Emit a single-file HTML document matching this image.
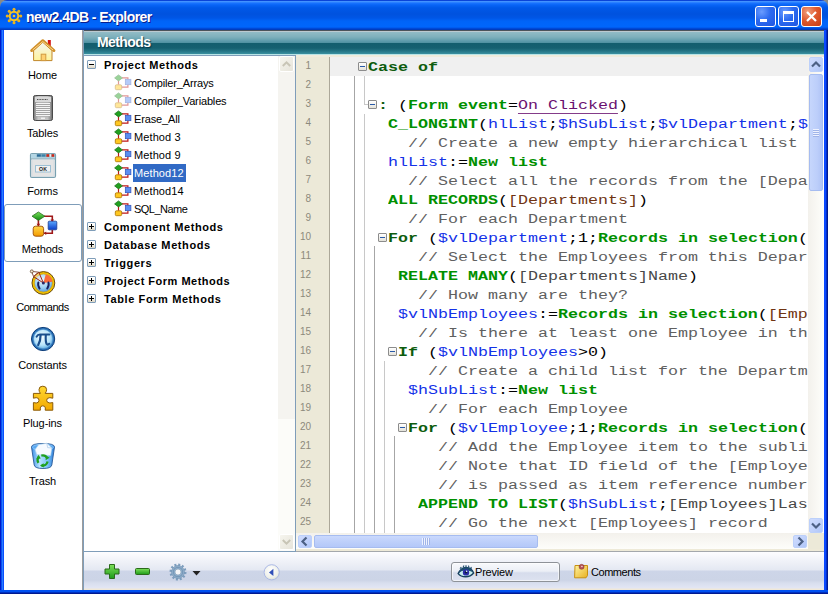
<!DOCTYPE html>
<html><head><meta charset="utf-8">
<style>
*{box-sizing:border-box}
html,body{margin:0;padding:0}
body{width:828px;height:594px;overflow:hidden;position:relative;background:#8a8a86;font-family:"Liberation Sans",sans-serif}
.a{position:absolute}
#title{left:0;top:0;width:828px;height:30px;border-radius:7px 7px 0 0;background:linear-gradient(to bottom,#0a44d8 0px,#0a44d8 1px,#4a98ff 1px,#3a8cff 2px,#1a74ff 3px,#0864f6 5px,#0058e8 8px,#0052de 14px,#0056e6 18px,#0064f8 21px,#0066fc 27px,#0052e4 28px,#0040c8 29px,#0038b8 30px)}
#title .t{left:26px;top:9px;font-weight:bold;font-size:14px;letter-spacing:-.55px;color:#fff;text-shadow:1px 1px 0 #0a1e8c;white-space:nowrap;line-height:16px}
.lb{left:0;top:30px;width:4px;height:564px;background:linear-gradient(to right,#0018c8 0,#0018c8 1px,#0a50f0 1px,#0a50f0 2px,#2a7aff 2px,#2a7aff 3px,#0a50ff 3px)}
.rb{left:824px;top:30px;width:4px;height:564px;background:linear-gradient(to right,#0a48ff 0,#0a48ff 2px,#0030c8 2px,#0030c8 3px,#001890 3px)}
.bb{left:0;top:590px;width:828px;height:4px;background:linear-gradient(to bottom,#0050f0 0,#0050f0 2px,#0030c0 2px,#0030c0 3px,#001890 3px)}
.tbtn{top:6px;width:21px;height:21px;border:1px solid #fff;border-radius:3px}
#side{left:4px;top:30px;width:78px;height:560px;background:#fff}
.sl{left:82px;top:30px;width:2px;height:560px;background:linear-gradient(to right,#9c9c9c 0,#9c9c9c 1px,#7f9db9 1px)}
.lab{width:77px;left:4px;text-align:center;font-size:11px;letter-spacing:-0.1px;color:#000;line-height:13px}
#hdr{left:84px;top:30px;width:740px;height:25px;background:linear-gradient(to bottom,#4c545a 0px,#4c545a 1px,#bccad0 1px,#bccad0 2px,#92bcc6 2px,#7eb0bc 7px,#5e9cac 11px,#4e90a0 13px,#135e6e 13px,#156070 18px,#247484 21px,#3a90a0 24px,#b8e4e6 24px,#b8e4e6 25px)}
#hdr .t{left:13px;top:5px;font-weight:bold;font-size:14px;letter-spacing:-.6px;color:#fff;text-shadow:1px 1px 1px #0b3848;line-height:15px}
#tree{left:84px;top:55px;width:212px;height:497px;background:#fff;border:1px solid #7f9db9;border-left:none}
.tr{height:18px;line-height:18px;font-size:11px;white-space:nowrap;color:#000}
.tc{font-weight:bold;letter-spacing:.6px}
.tm{letter-spacing:-.15px}
.exp{width:9px;height:9px;border:1px solid #7f9db9;border-radius:1px;background:linear-gradient(#fff 0,#fbfaf6 40%,#dcd6c4 100%)}
.exp .h{position:absolute;left:1px;top:3px;width:5px;height:1px;background:#000}
.exp .vv{position:absolute;left:3px;top:1px;width:1px;height:5px;background:#000}
#ed{left:296px;top:55px;width:528px;height:496px;background:#fff}
#gut{left:296px;top:55px;width:34px;height:478px;background:#ece9d8}
.ln{left:295px;width:16px;text-align:right;font-size:10px;color:#8c8a7c;line-height:19px;height:19px}
#code{left:330px;top:57px;width:478px;height:476px;overflow:hidden}
.cl{position:absolute;left:28px;height:19px;line-height:19px;font-family:"Liberation Mono",monospace;font-size:16.664px;white-space:pre;color:#000;transform:scaleY(.82);transform-origin:0 14px}
.k{color:#0d5c0d;font-weight:bold}
.c{color:#009000;font-weight:bold}
.v{color:#1432e8}
.m{color:#606060}
.tb{color:#703412}
.f{color:#484848}
.p{color:#6a1070;text-decoration:underline;text-underline-offset:4.5px}
.fb{position:absolute;width:9px;height:9px;border:1px solid #8c8c8c;border-radius:1px;background:linear-gradient(#fff,#e4e2da)}
.fb:after{content:"";position:absolute;left:1px;top:3px;width:5px;height:1px;background:#2a5aa8}
.gd{position:absolute;width:1px;background:#b4b4b4}
#tool{left:84px;top:552px;width:740px;height:38px;background:linear-gradient(to bottom,#fdfdff 0px,#f0f2f8 9px,#e4e8f2 18px,#cdd5e8 19px,#ccd4e6 28px,#d8deee 31px,#e2e6f4 36px,#f0e8d8 37px)}
</style></head><body>
<div id="title" class="a">
  <svg class="a" style="left:5px;top:7px" width="18" height="18" viewBox="0 0 18 18">
    <g stroke="#e0a818" stroke-width="1.6">
      <line x1="9" y1="2" x2="9" y2="16"/><line x1="2" y1="9" x2="16" y2="9"/>
      <line x1="4.1" y1="4.1" x2="13.9" y2="13.9"/><line x1="13.9" y1="4.1" x2="4.1" y2="13.9"/>
    </g>
    <g fill="#eab420"><circle cx="15.80" cy="9.00" r="1.5"/><circle cx="13.81" cy="13.81" r="1.5"/><circle cx="9.00" cy="15.80" r="1.5"/><circle cx="4.19" cy="13.81" r="1.5"/><circle cx="2.20" cy="9.00" r="1.5"/><circle cx="4.19" cy="4.19" r="1.5"/><circle cx="9.00" cy="2.20" r="1.5"/><circle cx="13.81" cy="4.19" r="1.5"/></g>
    <circle cx="9" cy="9" r="4.3" fill="#0a5ef0" stroke="#f2c428" stroke-width="2"/>
    <circle cx="9" cy="9" r="1.3" fill="#f2c428"/>
  </svg>
  <div class="a t">new2.4DB - Explorer</div>
  <div class="a tbtn" style="left:755px;background:radial-gradient(circle at 30% 25%,#6a9cff 0,#2c6af0 45%,#1f55e0 100%)"><div class="a" style="left:4px;top:12px;width:7px;height:3px;background:#fff"></div></div>
  <div class="a tbtn" style="left:778px;background:radial-gradient(circle at 30% 25%,#6a9cff 0,#2c6af0 45%,#1f55e0 100%)"><div class="a" style="left:4px;top:4px;width:11px;height:11px;border:1px solid #fff;border-top-width:3px"></div></div>
  <div class="a tbtn" style="left:801px;background:radial-gradient(circle at 30% 25%,#f0a080 0,#e05a30 45%,#c83c10 100%)">
    <svg class="a" style="left:3px;top:3px" width="13" height="13"><path d="M2 2 L11 11 M11 2 L2 11" stroke="#fff" stroke-width="2.2"/></svg></div>
</div>
<div class="a lb"></div><div class="a rb"></div><div class="a bb"></div>

<div id="side" class="a"></div>
<div class="a sl"></div>
<div class="a" style="left:4px;top:204px;width:78px;height:58px;border:1px solid #7f9db9;border-radius:3px;background:#fff"></div>
<svg class="a" style="left:0;top:0" width="84" height="594" viewBox="0 0 84 594">
<defs>
<linearGradient id="hw" x1="0" y1="0" x2="0" y2="1"><stop offset="0" stop-color="#f4f4f2"/><stop offset="1" stop-color="#fff49a"/></linearGradient>
<linearGradient id="tg" x1="0" y1="0" x2="1" y2="0"><stop offset="0" stop-color="#7a7a7a"/><stop offset=".25" stop-color="#c8c8c8"/><stop offset=".75" stop-color="#c0c0c0"/><stop offset="1" stop-color="#6a6a6a"/></linearGradient>
<linearGradient id="gg" x1="0" y1="0" x2="0" y2="1"><stop offset="0" stop-color="#7ae05a"/><stop offset="1" stop-color="#0f8a10"/></linearGradient>
<linearGradient id="bg" x1="0" y1="0" x2="0" y2="1"><stop offset="0" stop-color="#5aa8ff"/><stop offset="1" stop-color="#0a3cc8"/></linearGradient>
<linearGradient id="og" x1="0" y1="0" x2="0" y2="1"><stop offset="0" stop-color="#ffd84a"/><stop offset="1" stop-color="#f49a00"/></linearGradient>
<radialGradient id="dial" cx=".45" cy=".35" r=".7"><stop offset="0" stop-color="#f0faff"/><stop offset=".6" stop-color="#9ad0f4"/><stop offset="1" stop-color="#4a90d8"/></radialGradient>
<radialGradient id="pi" cx=".45" cy=".4" r=".6"><stop offset="0" stop-color="#f4fcff"/><stop offset=".7" stop-color="#b8e4fa"/><stop offset="1" stop-color="#6ab4e6"/></radialGradient>
<linearGradient id="pz" x1="0" y1="0" x2="0" y2="1"><stop offset="0" stop-color="#ffd830"/><stop offset="1" stop-color="#f2a800"/></linearGradient>
<linearGradient id="tr" x1="0" y1="0" x2="1" y2="0"><stop offset="0" stop-color="#3a8ee8"/><stop offset=".35" stop-color="#b8e4ff"/><stop offset=".7" stop-color="#7ac4fa"/><stop offset="1" stop-color="#2a7ad8"/></linearGradient>
</defs>
<!-- Home -->
<rect x="47.8" y="40" width="3" height="7" fill="#d41414"/>
<path d="M33.6 50.5 L42.8 42.2 L52 50.5 V60.6 H33.6Z" fill="url(#hw)" stroke="#c0862a" stroke-width="1"/>
<path d="M31.6 50.6 L42.8 40.6 L54 50.6" fill="none" stroke="#d0902a" stroke-width="2.8" stroke-linejoin="round" stroke-linecap="round"/><path d="M32.6 50 L42.8 41.6 L53 50" fill="none" stroke="#ffd890" stroke-width="1"/>
<rect x="41.2" y="54.2" width="4.6" height="6.4" fill="#ffd070" stroke="#d09a40" stroke-width="1"/>
<!-- Tables -->
<rect x="33.5" y="95.5" width="19" height="25" rx="1.8" fill="url(#tg)" stroke="#4a4a4a" stroke-width="1"/>
<rect x="35" y="97" width="16" height="5" fill="#d8d8d8"/>
<path d="M37 99.5 H48" stroke="#505050" stroke-width="1" stroke-dasharray="1 .6"/>
<rect x="35.5" y="102.5" width="15" height="14" fill="#a4a4a4"/>
<g stroke="#f4f4f4" stroke-width="1"><path d="M36 103.5H50M36 105.5H50M36 107.5H50M36 109.5H50M36 111.5H50M36 113.5H50M36 115.5H50"/></g>
<rect x="41" y="117.5" width="4" height="1.5" fill="#f0f0f0"/>
<!-- Forms -->
<rect x="30.5" y="153.5" width="25" height="24" rx="1.5" fill="#e6e6e6" stroke="#78a0b0" stroke-width="1.2"/>
<rect x="31" y="154" width="24" height="4.5" fill="#b4d6e4"/>
<rect x="31" y="158.5" width="24" height="1" fill="#78a0b0"/>
<rect x="32" y="159.5" width="22" height="17" fill="#e4e4e4" stroke="#c8d8e0" stroke-width=".6"/>
<rect x="36.5" y="153.6" width="18" height="3.6" fill="#8ab0c0"/><rect x="37" y="154.4" width="3.8" height="2.2" fill="#2a6a98"/><rect x="41.6" y="154.4" width="3.8" height="2.2" fill="#3a82a8"/><rect x="46.4" y="154.2" width="2.8" height="2.6" fill="#d02818"/><rect x="49.6" y="154.2" width="1.6" height="2.6" fill="#f0f0f0"/><rect x="51.6" y="154.2" width="2.6" height="2.6" fill="#d02818"/>
<rect x="35.5" y="165.5" width="15" height="6.5" fill="#f2f2f2" stroke="#9cc0d4" stroke-width="1"/>
<text x="43" y="171" font-family="Liberation Sans" font-weight="bold" font-size="5.2" text-anchor="middle" fill="#222">OK</text>
<!-- Methods -->
<g stroke="#a01818" stroke-width="1.6" fill="none"><path d="M44 216.3 H52.3 V221"/><path d="M38.4 220 V226"/><path d="M52.3 230 V233.3 H44"/></g>
<path d="M50.5 219.5 L52.3 222 L54.1 219.5Z M36.6 223.8 L38.4 226.3 L40.2 223.8Z M46.2 231.5 L43.8 233.3 L46.2 235.1Z" fill="#a01818"/>
<path d="M38.4 212 L44.8 216.2 L38.4 220.4 L32 216.2Z" fill="url(#gg)" stroke="#2a6a20" stroke-width=".8"/>
<rect x="48.2" y="221.2" width="8.6" height="8.6" rx="1" fill="url(#bg)" stroke="#1a3a90" stroke-width=".8"/>
<rect x="33.2" y="226.2" width="10.4" height="10" rx="2.4" fill="url(#og)" stroke="#9a4a00" stroke-width=".9"/>
<!-- Commands -->
<circle cx="43.4" cy="283" r="11.4" fill="#f2c200" stroke="#6a4a10" stroke-width="1"/>
<circle cx="43.4" cy="283" r="9.1" fill="url(#dial)" stroke="#d49a00" stroke-width=".6"/>
<path d="M43.4 283 L45.8 274.2 A9.1 9.1 0 0 1 52.5 281.8 Z" fill="#fa6a3a"/>
<path d="M38.4 282.4 Q37.4 285.6 39.6 288.6 M48.4 282.4 Q49.4 285.6 47.2 288.6" stroke="#1a2060" stroke-width="1.9" fill="none" stroke-linecap="round"/>
<path d="M43.4 283 L33.6 276.6 L38.8 272.2 Z" fill="#f4e0d8" fill-opacity=".45" stroke="#a02818" stroke-width="1"/>
<path d="M33.6 276.6 L31.6 271.4 L38.8 272.2" fill="none" stroke="#7a4030" stroke-width=".9"/>
<circle cx="43.4" cy="283" r="1.5" fill="#2a2a6a"/>
<circle cx="31.8" cy="271.4" r="1.5" fill="#f4ead8" stroke="#6a4a30" stroke-width=".8"/>
<!-- Constants -->
<circle cx="43.1" cy="339" r="11.6" fill="#2a72b8" stroke="#0c3c78" stroke-width="1"/>
<circle cx="43.1" cy="339" r="9.6" fill="url(#pi)" stroke="#5a9ad0" stroke-width=".6"/>
<path d="M36.6 336.6 Q37.6 334.6 40 334.6 H49.4" stroke="#1a4e8c" stroke-width="2" fill="none" stroke-linecap="round"/>
<path d="M40.6 335 Q40.6 341 38.2 345" stroke="#1a4e8c" stroke-width="2.2" fill="none" stroke-linecap="round"/>
<path d="M45.8 335 Q45.4 341.5 46.6 344 Q47.6 345.4 49.2 343.8" stroke="#1a4e8c" stroke-width="2.1" fill="none" stroke-linecap="round"/>
<!-- Plug-ins -->
<path d="M33.4 393.4 H40.4 Q39 391.6 39 389.6 Q39 386.2 42.8 386.2 Q46.6 386.2 46.6 389.6 Q46.6 391.6 45.2 393.4 H52.8 V398.2 Q49.6 397 47.4 398.4 Q46 400.3 47.4 402.2 Q49.6 403.6 52.8 402.6 V410.2 H45.2 Q45.8 407.6 44.6 406.4 Q42.8 405.2 41 406.4 Q39.8 407.6 40.4 410.2 H33.4 V402.6 Q36.6 403.6 38.4 402.2 Q39.6 400.3 38.4 398.4 Q36.6 397 33.4 398.2 Z" fill="url(#pz)" stroke="#8a5a08" stroke-width="1"/>
<!-- Trash -->
<path d="M31.5 447 Q31.5 443.5 43 443.5 Q54.5 443.5 54.5 447 L51.8 465 Q51.2 468.5 43 468.5 Q34.8 468.5 34.2 465 Z" fill="url(#tr)" stroke="#2a5a98" stroke-width=".9"/>
<ellipse cx="43" cy="447.2" rx="10.6" ry="2.8" fill="#5aa8f0" stroke="#8ac8ff" stroke-width=".7"/>
<path d="M35.2 449.5 L38.6 444.8 L46.8 443.2 L51.8 448 L50.6 455.5 L36.8 454.5 Z" fill="#f6faff" stroke="#b8d8f0" stroke-width=".6"/><path d="M46.8 443.2 L47.6 447.6 L51.8 448" fill="none" stroke="#a8c8e8" stroke-width=".7"/>
<g fill="none" stroke="#20a020" stroke-width="2.3" stroke-linecap="butt">
<path d="M41.3 455.6 A5.2 5.2 0 0 1 47.2 458.2"/>
<path d="M47.6 461.6 A5.2 5.2 0 0 1 41.6 465.6"/>
<path d="M38.4 462.8 A5.2 5.2 0 0 1 38.8 456.8"/>
</g>
<path d="M46 455.6 L49.6 457.8 L45.6 460.2Z M43.6 463.2 L40 465.6 L43.8 467.6Z M36.4 459 L38.6 454.8 L40.8 458.6Z" fill="#20a020"/>
</svg>
<div class="a lab" style="top:69px">Home</div>
<div class="a lab" style="top:127px">Tables</div>
<div class="a lab" style="top:185px">Forms</div>
<div class="a lab" style="top:243px">Methods</div>
<div class="a lab" style="top:301px;letter-spacing:-.45px">Commands</div>
<div class="a lab" style="top:359px">Constants</div>
<div class="a lab" style="top:417px">Plug-ins</div>
<div class="a lab" style="top:475px">Trash</div>


<div id="hdr" class="a"><div class="a t">Methods</div></div>

<div id="tree" class="a"></div>
<div class="a exp" style="left:87px;top:60px"><div class="h"></div></div>
<div class="a tr tc" style="left:104px;top:56px">Project Methods</div>
<div class="a tr tm" style="left:134px;top:74px;">Compiler_Arrays</div>
<div class="a tr tm" style="left:134px;top:92px;">Compiler_Variables</div>
<div class="a tr tm" style="left:134px;top:110px;">Erase_All</div>
<div class="a tr tm" style="left:134px;top:128px;letter-spacing:.1px;">Method 3</div>
<div class="a tr tm" style="left:134px;top:146px;letter-spacing:.1px;">Method 9</div>
<div class="a" style="left:133px;top:164px;width:53px;height:18px;background:#316ac5"></div>
<div class="a tr tm" style="left:134px;top:164px;color:#fff;letter-spacing:.1px;">Method12</div>
<div class="a tr tm" style="left:134px;top:182px;letter-spacing:.1px;">Method14</div>
<div class="a tr tm" style="left:134px;top:200px;letter-spacing:-.52px;">SQL_Name</div>
<div class="a exp" style="left:87px;top:222px"><div class="h"></div><div class="vv"></div></div>
<div class="a tr tc" style="left:104px;top:218px">Component Methods</div>
<div class="a exp" style="left:87px;top:240px"><div class="h"></div><div class="vv"></div></div>
<div class="a tr tc" style="left:104px;top:236px">Database Methods</div>
<div class="a exp" style="left:87px;top:258px"><div class="h"></div><div class="vv"></div></div>
<div class="a tr tc" style="left:104px;top:254px">Triggers</div>
<div class="a exp" style="left:87px;top:276px"><div class="h"></div><div class="vv"></div></div>
<div class="a tr tc" style="left:104px;top:272px;letter-spacing:.5px">Project Form Methods</div>
<div class="a exp" style="left:87px;top:294px"><div class="h"></div><div class="vv"></div></div>
<div class="a tr tc" style="left:104px;top:290px">Table Form Methods</div>
<svg class="a" style="left:0;top:0;overflow:visible" width="1" height="1"><g transform="translate(0,74)" opacity=".45">
<path d="M122 3.8 H127.9 V5.5 M118.5 6.5 V10.8 M127.9 10.6 V13.2 H121.5" stroke="#c01818" stroke-width="1.2" fill="none"/>
<path d="M118.5 0.9 L122.4 3.9 L118.5 6.9 L114.6 3.9Z" fill="#22a020" stroke="#0e6a0e" stroke-width=".7"/>
<rect x="125.3" y="5.3" width="5.6" height="5.4" fill="#5a8ef0" stroke="#3050b8" stroke-width=".7"/>
<rect x="115.3" y="10.8" width="6.4" height="4.9" rx="1.2" fill="#ffc820" stroke="#a87000" stroke-width=".8"/>
</g>
<g transform="translate(0,92)" opacity=".45">
<path d="M122 3.8 H127.9 V5.5 M118.5 6.5 V10.8 M127.9 10.6 V13.2 H121.5" stroke="#c01818" stroke-width="1.2" fill="none"/>
<path d="M118.5 0.9 L122.4 3.9 L118.5 6.9 L114.6 3.9Z" fill="#22a020" stroke="#0e6a0e" stroke-width=".7"/>
<rect x="125.3" y="5.3" width="5.6" height="5.4" fill="#5a8ef0" stroke="#3050b8" stroke-width=".7"/>
<rect x="115.3" y="10.8" width="6.4" height="4.9" rx="1.2" fill="#ffc820" stroke="#a87000" stroke-width=".8"/>
</g>
<g transform="translate(0,110)">
<path d="M122 3.8 H127.9 V5.5 M118.5 6.5 V10.8 M127.9 10.6 V13.2 H121.5" stroke="#c01818" stroke-width="1.2" fill="none"/>
<path d="M118.5 0.9 L122.4 3.9 L118.5 6.9 L114.6 3.9Z" fill="#22a020" stroke="#0e6a0e" stroke-width=".7"/>
<rect x="125.3" y="5.3" width="5.6" height="5.4" fill="#5a8ef0" stroke="#3050b8" stroke-width=".7"/>
<rect x="115.3" y="10.8" width="6.4" height="4.9" rx="1.2" fill="#ffc820" stroke="#a87000" stroke-width=".8"/>
</g>
<g transform="translate(0,128)">
<path d="M122 3.8 H127.9 V5.5 M118.5 6.5 V10.8 M127.9 10.6 V13.2 H121.5" stroke="#c01818" stroke-width="1.2" fill="none"/>
<path d="M118.5 0.9 L122.4 3.9 L118.5 6.9 L114.6 3.9Z" fill="#22a020" stroke="#0e6a0e" stroke-width=".7"/>
<rect x="125.3" y="5.3" width="5.6" height="5.4" fill="#5a8ef0" stroke="#3050b8" stroke-width=".7"/>
<rect x="115.3" y="10.8" width="6.4" height="4.9" rx="1.2" fill="#ffc820" stroke="#a87000" stroke-width=".8"/>
</g>
<g transform="translate(0,146)">
<path d="M122 3.8 H127.9 V5.5 M118.5 6.5 V10.8 M127.9 10.6 V13.2 H121.5" stroke="#c01818" stroke-width="1.2" fill="none"/>
<path d="M118.5 0.9 L122.4 3.9 L118.5 6.9 L114.6 3.9Z" fill="#22a020" stroke="#0e6a0e" stroke-width=".7"/>
<rect x="125.3" y="5.3" width="5.6" height="5.4" fill="#5a8ef0" stroke="#3050b8" stroke-width=".7"/>
<rect x="115.3" y="10.8" width="6.4" height="4.9" rx="1.2" fill="#ffc820" stroke="#a87000" stroke-width=".8"/>
</g>
<g transform="translate(0,164)">
<path d="M122 3.8 H127.9 V5.5 M118.5 6.5 V10.8 M127.9 10.6 V13.2 H121.5" stroke="#c01818" stroke-width="1.2" fill="none"/>
<path d="M118.5 0.9 L122.4 3.9 L118.5 6.9 L114.6 3.9Z" fill="#22a020" stroke="#0e6a0e" stroke-width=".7"/>
<rect x="125.3" y="5.3" width="5.6" height="5.4" fill="#5a8ef0" stroke="#3050b8" stroke-width=".7"/>
<rect x="115.3" y="10.8" width="6.4" height="4.9" rx="1.2" fill="#ffc820" stroke="#a87000" stroke-width=".8"/>
</g>
<g transform="translate(0,182)">
<path d="M122 3.8 H127.9 V5.5 M118.5 6.5 V10.8 M127.9 10.6 V13.2 H121.5" stroke="#c01818" stroke-width="1.2" fill="none"/>
<path d="M118.5 0.9 L122.4 3.9 L118.5 6.9 L114.6 3.9Z" fill="#22a020" stroke="#0e6a0e" stroke-width=".7"/>
<rect x="125.3" y="5.3" width="5.6" height="5.4" fill="#5a8ef0" stroke="#3050b8" stroke-width=".7"/>
<rect x="115.3" y="10.8" width="6.4" height="4.9" rx="1.2" fill="#ffc820" stroke="#a87000" stroke-width=".8"/>
</g>
<g transform="translate(0,200)">
<path d="M122 3.8 H127.9 V5.5 M118.5 6.5 V10.8 M127.9 10.6 V13.2 H121.5" stroke="#c01818" stroke-width="1.2" fill="none"/>
<path d="M118.5 0.9 L122.4 3.9 L118.5 6.9 L114.6 3.9Z" fill="#22a020" stroke="#0e6a0e" stroke-width=".7"/>
<rect x="125.3" y="5.3" width="5.6" height="5.4" fill="#5a8ef0" stroke="#3050b8" stroke-width=".7"/>
<rect x="115.3" y="10.8" width="6.4" height="4.9" rx="1.2" fill="#ffc820" stroke="#a87000" stroke-width=".8"/>
</g></svg>

<div id="ed" class="a"></div>
<div id="gut" class="a"></div>
<div class="a" style="left:329px;top:57px;width:1px;height:476px;background:#aca899"></div>
<div class="a" style="left:296px;top:55px;width:528px;height:2px;background:#f0ebdc"></div>
<div class="a" style="left:330px;top:57px;width:478px;height:19px;background:#f0f0f0"></div>
<div class="a ln" style="top:56px">1</div>
<div class="a ln" style="top:75px">2</div>
<div class="a ln" style="top:94px">3</div>
<div class="a ln" style="top:113px">4</div>
<div class="a ln" style="top:132px">5</div>
<div class="a ln" style="top:151px">6</div>
<div class="a ln" style="top:170px">7</div>
<div class="a ln" style="top:189px">8</div>
<div class="a ln" style="top:208px">9</div>
<div class="a ln" style="top:227px">10</div>
<div class="a ln" style="top:246px">11</div>
<div class="a ln" style="top:265px">12</div>
<div class="a ln" style="top:284px">13</div>
<div class="a ln" style="top:303px">14</div>
<div class="a ln" style="top:322px">15</div>
<div class="a ln" style="top:341px">16</div>
<div class="a ln" style="top:360px">17</div>
<div class="a ln" style="top:379px">18</div>
<div class="a ln" style="top:398px">19</div>
<div class="a ln" style="top:417px">20</div>
<div class="a ln" style="top:436px">21</div>
<div class="a ln" style="top:455px">22</div>
<div class="a ln" style="top:474px">23</div>
<div class="a ln" style="top:493px">24</div>
<div class="a ln" style="top:512px">25</div>
<div id="code" class="a">
<div class="gd" style="left:24px;top:19px;height:457px;background:#a6a6a6"></div>
<div class="gd" style="left:34px;top:19px;height:29px;background:#c8c8c8"></div>
<div class="gd" style="left:34px;top:47px;width:4px;height:1px;background:#c8c8c8"></div>
<div class="gd" style="left:34px;top:57px;height:419px;background:#c8c8c8"></div>
<div class="gd" style="left:44px;top:189px;height:287px;background:#a6a6a6"></div>
<div class="gd" style="left:54px;top:304px;height:172px;background:#c8c8c8"></div>
<div class="gd" style="left:64px;top:379px;height:97px;background:#a6a6a6"></div>
<div class="fb" style="left:28px;top:5px"></div>
<div class="fb" style="left:38px;top:43px"></div>
<div class="fb" style="left:48px;top:176px"></div>
<div class="fb" style="left:58px;top:290px"></div>
<div class="fb" style="left:68px;top:366px"></div>
<div class="cl" style="left:38px;top:0px"><span class="k">Case of</span></div>
<div class="cl" style="left:48px;top:38px"><span class="k">:</span> (<span class="c">Form event</span>=<span class="p">On Clicked</span>)</div>
<div class="cl" style="left:58px;top:57px"><span class="c">C_LONGINT</span>(<span class="v">hlList</span>;<span class="v">$hSubList</span>;<span class="v">$vlDepartment</span>;<span class="v">$vlEmployee</span></div>
<div class="cl" style="left:78px;top:76px"><span class="m">// Create a new empty hierarchical list</span></div>
<div class="cl" style="left:58px;top:95px"><span class="v">hlList</span>:=<span class="c">New list</span></div>
<div class="cl" style="left:78px;top:114px"><span class="m">// Select all the records from the [Departments] table</span></div>
<div class="cl" style="left:58px;top:133px"><span class="c">ALL RECORDS</span>(<span class="tb">[Departments]</span>)</div>
<div class="cl" style="left:78px;top:152px"><span class="m">// For each Department</span></div>
<div class="cl" style="left:58px;top:171px"><span class="k">For</span> (<span class="v">$vlDepartment</span>;1;<span class="c">Records in selection</span>(<span class="tb">[Departments]</span>))</div>
<div class="cl" style="left:88px;top:190px"><span class="m">// Select the Employees from this Department</span></div>
<div class="cl" style="left:68px;top:209px"><span class="c">RELATE MANY</span>(<span class="f">[Departments]Name</span>)</div>
<div class="cl" style="left:88px;top:228px"><span class="m">// How many are they?</span></div>
<div class="cl" style="left:68px;top:247px"><span class="v">$vlNbEmployees</span>:=<span class="c">Records in selection</span>(<span class="tb">[Employees]</span>)</div>
<div class="cl" style="left:88px;top:266px"><span class="m">// Is there at least one Employee in this Department?</span></div>
<div class="cl" style="left:68px;top:285px"><span class="k">If</span> (<span class="v">$vlNbEmployees</span>&gt;0)</div>
<div class="cl" style="left:98px;top:304px"><span class="m">// Create a child list for the Department item</span></div>
<div class="cl" style="left:78px;top:323px"><span class="v">$hSubList</span>:=<span class="c">New list</span></div>
<div class="cl" style="left:98px;top:342px"><span class="m">// For each Employee</span></div>
<div class="cl" style="left:78px;top:361px"><span class="k">For</span> (<span class="v">$vlEmployee</span>;1;<span class="c">Records in selection</span>(<span class="tb">[Employees]</span>))</div>
<div class="cl" style="left:108px;top:380px"><span class="m">// Add the Employee item to the sublist</span></div>
<div class="cl" style="left:108px;top:399px"><span class="m">// Note that ID field of the [Employees] table</span></div>
<div class="cl" style="left:108px;top:418px"><span class="m">// is passed as item reference number</span></div>
<div class="cl" style="left:88px;top:437px"><span class="c">APPEND TO LIST</span>(<span class="v">$hSubList</span>;<span class="f">[Employees]LastName</span>;<span class="f">[Employees]ID</span>)</div>
<div class="cl" style="left:108px;top:456px"><span class="m">// Go the next [Employees] record</span></div>
</div>
<style>
.trk{background:linear-gradient(to right,#f3f1ec,#fefefb)}
.trkh{background:linear-gradient(to bottom,#f3f1ec,#fefefb)}
.sbd{border:1px solid #fff;border-radius:2px;background:linear-gradient(135deg,#f6f5ee,#e6e4da)}
.sbb{border-radius:2px;background:linear-gradient(135deg,#cfdcfe 0%,#c2d3fc 50%,#b0c6f8 100%);border:1px solid #bcd0fa}
.thv{border-radius:2px;background:linear-gradient(to right,#c6d6fc,#bccefa 60%,#b0c4f6);border:1px solid #a6bcf0}
</style>
<!-- tree scrollbar -->
<div class="a" style="left:278px;top:56px;width:17px;height:495px;background:#fcfcf9"></div>
<div class="a" style="left:278px;top:56px;width:17px;height:363px;background:#f5f4f0"></div>
<div class="a sbd" style="left:279px;top:56px;width:15px;height:16px"></div>
<svg class="a" style="left:279px;top:56px" width="15" height="16"><path d="M3.8 10 L7.5 6.3 L11.2 10" stroke="#c8c5b6" stroke-width="2" fill="none"/></svg>
<div class="a sbd" style="left:279px;top:534px;width:15px;height:16px"></div>
<svg class="a" style="left:279px;top:534px" width="15" height="16"><path d="M3.8 6 L7.5 9.7 L11.2 6" stroke="#c8c5b6" stroke-width="2" fill="none"/></svg>
<!-- code v scroll -->
<div class="a trk" style="left:808px;top:57px;width:16px;height:476px"></div>
<div class="a sbb" style="left:809px;top:57px;width:14px;height:15px"></div>
<svg class="a" style="left:809px;top:57px" width="14" height="15"><path d="M3 9.5 L7 5.5 L11 9.5" stroke="#4d6185" stroke-width="2.2" fill="none"/></svg>
<div class="a thv" style="left:809px;top:74px;width:14px;height:117px"></div>
<svg class="a" style="left:809px;top:74px" width="14" height="117"><path d="M4 55.5H10M4 57.5H10M4 59.5H10M4 61.5H10" stroke="#eef2ff" stroke-width="1"/><path d="M4 56.5H10M4 58.5H10M4 60.5H10M4 62.5H10" stroke="#a0b4e8" stroke-width="1"/></svg>
<div class="a sbb" style="left:809px;top:518px;width:14px;height:15px"></div>
<svg class="a" style="left:809px;top:518px" width="14" height="15"><path d="M3 5.5 L7 9.5 L11 5.5" stroke="#4d6185" stroke-width="2.2" fill="none"/></svg>
<!-- code h scroll -->
<div class="a trkh" style="left:296px;top:533px;width:512px;height:17px"></div>
<div class="a" style="left:808px;top:533px;width:16px;height:17px;background:#ece9d8"></div>
<div class="a sbb" style="left:298px;top:535px;width:14px;height:13px"></div>
<svg class="a" style="left:298px;top:535px" width="14" height="13"><path d="M8.5 2.5 L4.5 6.5 L8.5 10.5" stroke="#4d6185" stroke-width="2.2" fill="none"/></svg>
<div class="a thv" style="left:314px;top:535px;width:224px;height:13px;background:linear-gradient(to bottom,#cad9fd,#bccefa 60%,#b4c8f8)"></div>
<svg class="a" style="left:314px;top:535px" width="224" height="13"><path d="M108.5 3V10M110.5 3V10M112.5 3V10M114.5 3V10" stroke="#eef2ff" stroke-width="1"/><path d="M109.5 3V10M111.5 3V10M113.5 3V10M115.5 3V10" stroke="#a0b4e8" stroke-width="1"/></svg>
<div class="a sbb" style="left:793px;top:535px;width:14px;height:13px"></div>
<svg class="a" style="left:793px;top:535px" width="14" height="13"><path d="M5.5 2.5 L9.5 6.5 L5.5 10.5" stroke="#4d6185" stroke-width="2.2" fill="none"/></svg>
<div class="a" style="left:296px;top:549px;width:528px;height:2px;background:#eeead8"></div>
<div class="a" style="left:296px;top:551px;width:528px;height:1px;background:#a4a8ac"></div>


<div id="tool" class="a"></div>
<svg class="a" style="left:0;top:0" width="828" height="594" viewBox="0 0 828 594">
<defs>
<linearGradient id="gpl" x1="0" y1="0" x2="0" y2="1"><stop offset="0" stop-color="#7ee05a"/><stop offset="1" stop-color="#1c9a18"/></linearGradient>
<radialGradient id="gbtn" cx=".45" cy=".35" r=".7"><stop offset="0" stop-color="#ffffff"/><stop offset=".7" stop-color="#eef0ea"/><stop offset="1" stop-color="#d8dcd0"/></radialGradient>
<linearGradient id="note" x1="0" y1="0" x2="1" y2="1"><stop offset="0" stop-color="#fff4a0"/><stop offset="1" stop-color="#e8b020"/></linearGradient>
</defs>
<path d="M109.5 564.5 H114.5 V569 H119 V574 H114.5 V578.5 H109.5 V574 H105 V569 H109.5 Z" fill="url(#gpl)" stroke="#2a6a1a" stroke-width="1"/>
<rect x="135.5" y="568.5" width="14" height="6" rx="1" fill="url(#gpl)" stroke="#2a6a1a" stroke-width="1"/>
<g transform="translate(178,572)">
<circle r="7.3" fill="none" stroke="#7e9ebe" stroke-width="2.4" stroke-dasharray="2 1.82"/>
<circle r="6.4" fill="#92b2ce" stroke="#7090b0" stroke-width=".7"/>
<circle r="4.6" fill="none" stroke="#7898b8" stroke-width="1.2"/>
<circle r="3" fill="#f6f6f8" stroke="#6a8aa8" stroke-width=".5"/>
</g>
<path d="M192.5 571 H200.5 L196.5 575.5Z" fill="#222"/>
<circle cx="271.7" cy="572.3" r="7.6" fill="url(#gbtn)" stroke="#aab8e6" stroke-width="1"/>
<path d="M273.4 568.8 V576 L269 572.4Z" fill="#2f4fb8"/>
</svg>
<div class="a" style="left:451px;top:562px;width:109px;height:20px;border:1px solid #8e9298;border-radius:3px;background:linear-gradient(to bottom,#f8f9fc 0,#eceff6 45%,#d6dcec 55%,#dde2f0 100%);box-shadow:inset 0 0 0 1px rgba(255,255,255,.6)"></div>
<svg class="a" style="left:456px;top:564px" width="20" height="15" viewBox="0 0 20 15">
<path d="M2.2 9.6 Q5 3.6 10 3.4 Q15.6 3.4 17.6 9 Q14.6 12.8 9.6 12.8 Q4.6 12.8 2.2 9.6Z" fill="#c8eef0" stroke="#17405e" stroke-width="1.4"/>
<path d="M2.4 9.2 Q5 3.4 10 3.2 Q15.6 3.2 17.6 8.6 Q14 6.4 10 6.2 Q5.6 6.2 2.4 9.2Z" fill="#1d4d70"/>
<path d="M4 4.6 L5.4 3 M7 3.4 L8 1.6 M10 3 V1.2 M13 3.4 L12.4 1.6 M15.6 4.6 L14.8 3" stroke="#1d4d70" stroke-width="1.1"/>
<circle cx="10" cy="8.4" r="3.2" fill="#2c2ca8"/>
<circle cx="10" cy="8.2" r="1.2" fill="#0a1a3a"/>
<circle cx="10.6" cy="7.2" r=".8" fill="#e8f8ff"/>
</svg>
<div class="a" style="left:475px;top:565px;font-size:11px;line-height:14px;letter-spacing:-.2px">Preview</div>
<svg class="a" style="left:573px;top:563px" width="16" height="17" viewBox="0 0 16 17">
<path d="M2 2.5 H14.5 V12.5 L13 14.8 H1.6Z" fill="url(#note)" stroke="#c89010" stroke-width="1"/>
<circle cx="8.6" cy="3.8" r="2.5" fill="#b85454" stroke="#7a3030" stroke-width=".5"/><circle cx="8.9" cy="3.5" r=".8" fill="#f4dada"/>
</svg>
<div class="a" style="left:591px;top:565px;font-size:11px;line-height:14px;letter-spacing:-.45px">Comments</div>

</body></html>
